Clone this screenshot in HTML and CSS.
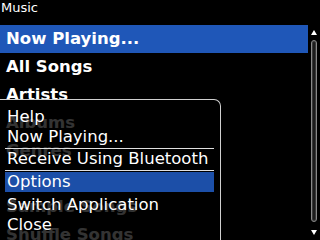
FILE: index.html
```html
<!DOCTYPE html>
<html>
<head>
<meta charset="utf-8">
<link rel="stylesheet" href="styles.css">
</head>
<body>
<div class="screen">
  <div class="title">Music</div>
  <div class="main">
    <ul class="list">
      <li class="row selected">Now Playing...</li>
      <li class="row">All Songs</li>
      <li class="row">Artists</li>
      <li class="row">Albums</li>
      <li class="row">Genres</li>
      <li class="row">Playlists</li>
      <li class="row">Sample Songs</li>
      <li class="row">Shuffle Songs</li>
    </ul>
    <div class="scroll">
      <div class="arrow up"></div>
      <div class="track"></div>
      <div class="arrow down"></div>
    </div>
  </div>
  <div class="menu">
    <div class="item">Help</div>
    <div class="item">Now Playing...</div>
    <div class="sep"></div>
    <div class="item">Receive Using Bluetooth</div>
    <div class="sep sep-b"></div>
    <div class="item active">Options</div>
    <div class="item after">Switch Application</div>
    <div class="item">Close</div>
  </div>
</div>
</body>
</html>
```
FILE: styles.css
```css
html, body {
  margin: 0;
  padding: 0;
  background: #000;
}
.screen {
  position: relative;
  width: 320px;
  height: 240px;
  overflow: hidden;
  background: #000;
  color: #fff;
  font-family: "DejaVu Sans", sans-serif;
}
.title {
  height: 25px;
  box-sizing: border-box;
  padding-left: 1px;
  font-size: 13px;
  line-height: 16px;
}
.main {
  display: flex;
}
.list {
  list-style: none;
  margin: 0;
  padding: 0;
  width: 308px;
}
.row {
  height: 28px;
  line-height: 28px;
  padding-left: 6px;
  font-size: 16.5px;
  font-weight: bold;
  white-space: nowrap;
}
.row.selected {
  background: #1f57b8;
}
.scroll {
  width: 12px;
  display: flex;
  flex-direction: column;
  align-items: flex-start;
  padding-left: 3px;
  box-sizing: border-box;
  padding-top: 5px;
}
.arrow {
  width: 0;
  height: 0;
  border-left: 3px solid transparent;
  border-right: 3px solid transparent;
}
.arrow.up {
  border-bottom: 5px solid #fff;
}
.arrow.down {
  border-top: 5px solid #fff;
  margin-top: 8px;
}
.track {
  margin-top: 5px;
  width: 6px;
  height: 182px;
  box-sizing: border-box;
  border: 1px solid #8a8a8a;
  border-radius: 3px;
  background: #1c1c1c;
  box-shadow: inset 0 0 0 1px #3a3a3a;
}
.menu {
  position: absolute;
  left: 0;
  top: 99px;
  width: 221px;
  bottom: 0;
  box-sizing: border-box;
  border-top: 1px solid #d0d0d0;
  border-right: 1px solid #d0d0d0;
  border-top-right-radius: 7px;
  background: rgba(0, 0, 0, 0.8);
  padding: 7px 6px 0 5px;
}
.item {
  height: 20px;
  line-height: 20px;
  font-size: 16.5px;
  padding-left: 2px;
  white-space: nowrap;
}
.item.active {
  background: #1c4fa8;
}
.item.after {
  margin-top: 3px;
}
.sep {
  height: 1px;
  margin-top: 1px;
  background: #e0e0e0;
}
.sep.sep-b {
  margin-bottom: 1px;
}
```
